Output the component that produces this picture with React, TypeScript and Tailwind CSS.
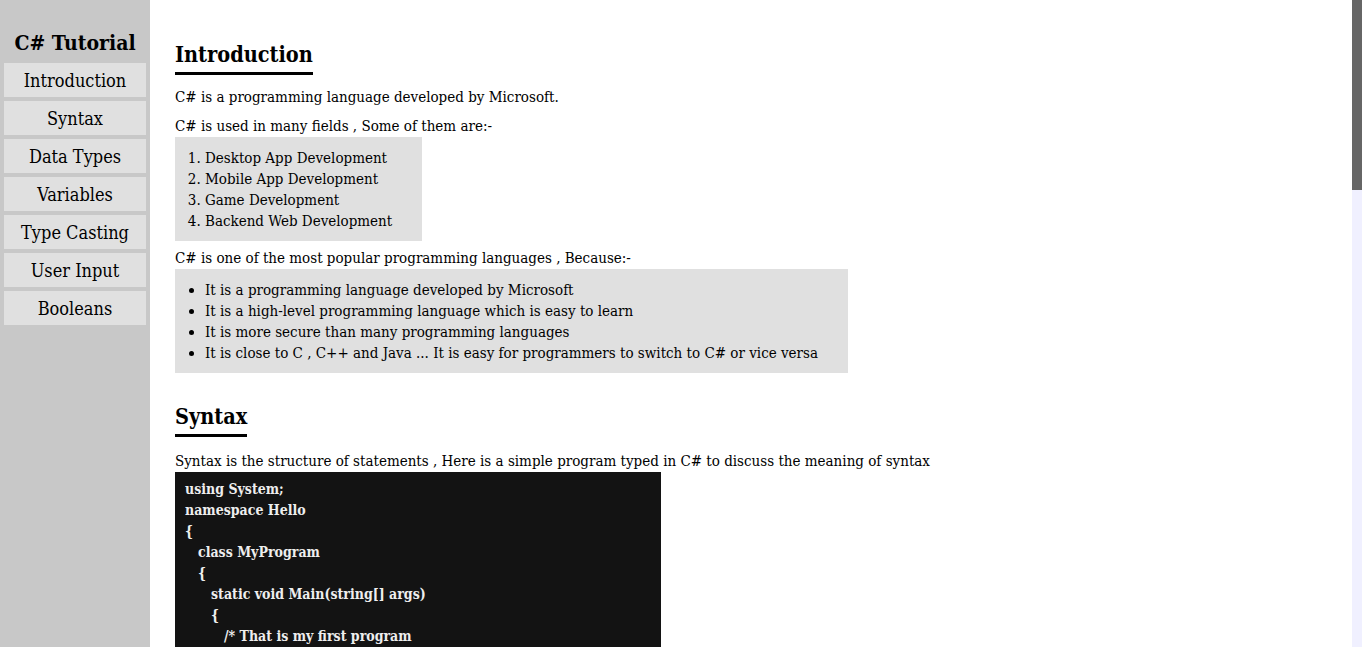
const navItems = [
  'Introduction',
  'Syntax',
  'Data Types',
  'Variables',
  'Type Casting',
  'User Input',
  'Booleans',
];

const codeLines: [number, string][] = [
  [0, 'using System;'],
  [0, 'namespace Hello'],
  [0, '{'],
  [1, 'class MyProgram'],
  [1, '{'],
  [2, 'static void Main(string[] args)'],
  [2, '{'],
  [3, '/* That is my first program'],
  [3, 'It prints Hello World */'],
];

const indent = ['pl-0', 'pl-[13px]', 'pl-[26px]', 'pl-[39px]'];

const Heading = ({ children }: { children: string }) => (
  <h2 className="w-fit text-[21.5px] leading-[28px] font-bold pb-[3px] border-b-[3px] border-black">
    {children}
  </h2>
);

export default function App() {
  return (
    <div
      className="flex h-screen overflow-hidden text-black"
      style={{ fontFamily: '"DejaVu Serif Condensed", "DejaVu Serif", serif' }}
    >
      <aside className="w-[150px] shrink-0 h-full bg-[#c8c8c8] px-[4px] pt-[28px]">
        <div className="text-center text-[21px] leading-[30px] font-bold mb-[5px]">C# Tutorial</div>
        <nav className="flex flex-col gap-[4px]">
          {navItems.map((item) => (
            <a
              key={item}
              href="#"
              className="h-[34px] flex items-center justify-center bg-[#e0e0e0] text-[18px]"
            >
              {item}
            </a>
          ))}
        </nav>
      </aside>

      <main className="flex-1 h-full overflow-hidden pl-[25px] pt-[41px] text-[15px] leading-[21px]">
        <section>
          <Heading>Introduction</Heading>
          <p className="mt-[12px]">C# is a programming language developed by Microsoft.</p>
          <p className="mt-[8px]">C# is used in many fields , Some of them are:-</p>
          <ol className="w-fit list-decimal bg-[#e0e0e0] pl-[30px] pr-[30px] pt-[11px] pb-[9px]">
            <li>Desktop App Development</li>
            <li>Mobile App Development</li>
            <li>Game Development</li>
            <li>Backend Web Development</li>
          </ol>
          <p className="mt-[7px]">C# is one of the most popular programming languages , Because:-</p>
          <ul className="w-fit list-disc bg-[#e0e0e0] pl-[30px] pr-[30px] pt-[11px] pb-[9px]">
            <li>It is a programming language developed by Microsoft</li>
            <li>It is a high-level programming language which is easy to learn</li>
            <li>It is more secure than many programming languages</li>
            <li>It is close to C , C++ and Java ... It is easy for programmers to switch to C# or vice versa</li>
          </ul>
        </section>

        <section className="mt-[30px]">
          <Heading>Syntax</Heading>
          <p className="mt-[14px]">
            Syntax is the structure of statements , Here is a simple program typed in C# to discuss the meaning of syntax
          </p>
          <div className="w-[486px] bg-[#131313] text-[#eeeeee] text-[14px] font-bold px-[10px] pt-[7px]">
            {codeLines.map(([level, line], i) => (
              <div key={i} className={indent[level]}>
                {line}
              </div>
            ))}
          </div>
        </section>
      </main>

      <div className="w-[10px] shrink-0 h-full bg-[#f0f0ff]">
        <div className="h-[190px] bg-[#666666]" />
      </div>
    </div>
  );
}
